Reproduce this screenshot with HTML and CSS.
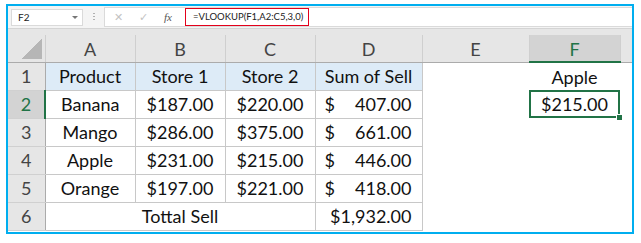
FILE: index.html
```html
<!DOCTYPE html>
<html lang="en">
<head>
    <meta charset="UTF-8">
    <title>VLOOKUP Sheet</title>
    <link rel="stylesheet" href="styles.css">
</head>
<body>
    <div class="window">
        <!-- Name box + formula bar -->
        <div class="formula-bar">
            <div class="name-box">
                <span>F2</span>
                <span class="drop"></span>
            </div>
            <div class="grip"></div>
            <div class="formula-box">
                <div class="buttons">
                    <span class="btn">&#x2715;</span>
                    <span class="btn">&#x2713;</span>
                    <span class="btn fx"><i>f</i>x</span>
                </div>
                <div class="formula">=VLOOKUP(F1,A2:C5,3,0)</div>
            </div>
        </div>

        <div class="header-gap"></div>

        <table class="sheet">
            <colgroup>
                <col class="c-row">
                <col class="c-90">
                <col class="c-90">
                <col class="c-90">
                <col class="c-107">
                <col class="c-107">
                <col class="c-91">
                <col class="c-rest">
            </colgroup>
            <thead>
                <tr>
                    <th class="corner"></th>
                    <th>A</th>
                    <th>B</th>
                    <th>C</th>
                    <th>D</th>
                    <th>E</th>
                    <th class="col-sel">F</th>
                    <th class="rest"></th>
                </tr>
            </thead>
            <tbody>
                <tr class="title-row">
                    <th class="row-head">1</th>
                    <td class="blue">Product</td>
                    <td class="blue">Store 1</td>
                    <td class="blue">Store 2</td>
                    <td class="blue last">Sum of Sell</td>
                    <td class="free"></td>
                    <td class="free">Apple</td>
                    <td class="free"></td>
                </tr>
                <tr>
                    <th class="row-head row-sel">2</th>
                    <td>Banana</td>
                    <td>$187.00</td>
                    <td>$220.00</td>
                    <td class="last"><div class="acct"><span>$</span><span>407.00</span></div></td>
                    <td class="free"></td>
                    <td class="free active">$215.00<span class="handle"></span></td>
                    <td class="free"></td>
                </tr>
                <tr>
                    <th class="row-head">3</th>
                    <td>Mango</td>
                    <td>$286.00</td>
                    <td>$375.00</td>
                    <td class="last"><div class="acct"><span>$</span><span>661.00</span></div></td>
                    <td class="free"></td>
                    <td class="free"></td>
                    <td class="free"></td>
                </tr>
                <tr>
                    <th class="row-head">4</th>
                    <td>Apple</td>
                    <td>$231.00</td>
                    <td>$215.00</td>
                    <td class="last"><div class="acct"><span>$</span><span>446.00</span></div></td>
                    <td class="free"></td>
                    <td class="free"></td>
                    <td class="free"></td>
                </tr>
                <tr>
                    <th class="row-head">5</th>
                    <td>Orange</td>
                    <td>$197.00</td>
                    <td>$221.00</td>
                    <td class="last"><div class="acct"><span>$</span><span>418.00</span></div></td>
                    <td class="free"></td>
                    <td class="free"></td>
                    <td class="free"></td>
                </tr>
                <tr>
                    <th class="row-head">6</th>
                    <td colspan="3">Tottal Sell</td>
                    <td class="last total">$1,932.00</td>
                    <td class="free"></td>
                    <td class="free"></td>
                    <td class="free"></td>
                </tr>
            </tbody>
        </table>
    </div>
</body>
</html>
```

FILE: styles.css
```css
/* Page */
body {
    margin: 0;
    padding: 0;
    background-color: #fff;
    font-family: Lato, "Open Sans", sans-serif;
    color: #111;
}

.window {
    box-sizing: border-box;
    width: 628px;
    height: 230px;
    margin: 4px 0 0 6px;
    border: 2px solid #00aeef; /* blue frame */
    background-color: #fff;
    overflow: hidden;
}

/* Formula bar */
.formula-bar {
    display: flex;
    align-items: center;
    height: 22px;
    border-bottom: 1px solid #d4d4d4;
    background-color: #f4f4f4;
    padding-left: 3px;
}

.name-box {
    box-sizing: border-box;
    display: flex;
    align-items: center;
    justify-content: space-between;
    width: 72px;
    height: 17px;
    padding: 0 4px 0 6px;
    background-color: #fff;
    border: 1px solid #dadada;
    font-size: 10px;
    color: #222;
}

.drop {
    width: 0;
    height: 0;
    border-left: 3px solid transparent;
    border-right: 3px solid transparent;
    border-top: 3px solid #777;
}

.grip {
    width: 2px;
    height: 10px;
    margin: 0 9px 0 10px;
    background-image: radial-gradient(circle, #b0b0b0 0.8px, transparent 1px);
    background-size: 2px 3px;
}

.formula-box {
    flex: 1;
    display: flex;
    align-items: stretch;
    height: 18px;
    background-color: #fff;
    border: 1px solid #dadada;
    border-right: none;
}

.buttons {
    display: flex;
    align-items: center;
    width: 71px;
    padding-left: 9px;
    gap: 16px;
    font-size: 11px;
    color: #c3c3c3;
}

.btn.fx {
    color: #555;
    font-family: "Liberation Serif", serif;
    font-size: 11px;
    font-style: italic;
}

.formula {
    box-sizing: border-box;
    flex: none;
    border: 1px solid #e3001b; /* red highlight */
    padding: 2px 5px 0 7px;
    font-size: 9.5px;
    color: #222;
}

/* Column header strip above the grid */
.header-gap {
    height: 6px;
    background-color: #e6e6e6;
}

/* Sheet grid */
.sheet {
    border-collapse: collapse;
    table-layout: fixed;
    width: 624px;
    font-size: 18px;
}

.c-row { width: 37px; }
.c-90 { width: 90px; }
.c-107 { width: 107px; }
.c-91 { width: 91px; }
.c-rest { width: 12px; }

.sheet th {
    font-weight: normal;
    color: #444;
    background-color: #e6e6e6;
}

.sheet thead th {
    height: 24px;
    padding: 2px 0 0;
    border-left: 1px solid #cfcfcf;
    border-right: 1px solid #cfcfcf;
    border-bottom: 1px solid #ababab;
    line-height: 24px;
}

.sheet thead th.corner {
    border-left: none;
    background: #e6e6e6 linear-gradient(to bottom right, transparent 50%, #b6b6b6 50%) no-repeat right 3px bottom 3px / 20px 20px;
}

.sheet thead th.col-sel {
    background-color: #d3d3d3;
    color: #217346;
    border-bottom: 2px solid #217346;
}

.sheet thead th.rest {
    border-right: none;
}

.row-head {
    height: 27px;
    padding: 0;
    border-right: 1px solid #ababab;
    border-bottom: 1px solid #d0d0d0;
}

.row-head.row-sel {
    background-color: #d3d3d3;
    color: #217346;
    border-right: 2px solid #217346;
}

.sheet td {
    height: 27px;
    padding: 0 4px;
    text-align: center;
    border: 1px solid #c8c8c8;
    white-space: nowrap;
    color: #111;
}

.sheet td.blue {
    background-color: #ddebf7;
}

.sheet td.free {
    border: none;
}

.sheet td.last {
    text-align: right;
}

.acct {
    display: flex;
    justify-content: space-between;
    padding-left: 5px;
    padding-right: 6px;
}

.sheet td.total {
    padding-right: 10px;
}

.sheet td.blue.last {
    text-align: center;
}

.sheet td.active {
    position: relative;
    outline: 2px solid #217346;
    outline-offset: -2px;
}

.handle {
    position: absolute;
    right: -3px;
    bottom: -3px;
    width: 5px;
    height: 5px;
    background-color: #217346;
    border: 1px solid #fff;
}
```
